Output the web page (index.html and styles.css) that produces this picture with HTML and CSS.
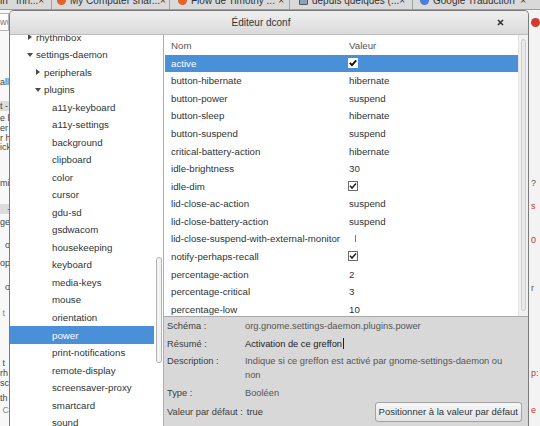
FILE: index.html
```html
<!DOCTYPE html>
<html lang="fr">
<head>
<meta charset="utf-8">
<title>Éditeur dconf</title>
<link rel="stylesheet" href="styles.css">
</head>
<body>
<div class="tabbar">
  <div class="tab t1"><span class="tx">in &nbsp; Inn...</span><span class="tx x">×</span></div>
  <div class="tab t2"><span class="fav"></span><span class="tx">My Computer shar...</span><span class="tx x">×</span></div>
  <div class="tab t3"><span class="fav"></span><span class="tx">Flow de Timothy ...</span><span class="tx x">×</span></div>
  <div class="tab t4"><span class="fav img"></span><span class="tx">depuis quelques (...</span><span class="tx x">×</span></div>
  <div class="tab t5"><span class="fav goo"></span><span class="tx">Google Traduction</span><span class="tx x">×</span></div>
</div>
<div class="desk">
  <div class="bgl">
    <div class="urlbox">www</div>
    <div class="frags">
      <div class="frag">all</div>
      <div class="frag band">t -</div>
      <div class="frag">e b</div>
      <div class="frag">er</div>
      <div class="frag">r h</div>
      <div class="frag">ick</div>
      <div class="frag">mi</div>
      <div class="frag band">&nbsp;&nbsp;&nbsp;-</div>
      <div class="frag">ge</div>
      <div class="frag">&nbsp;&nbsp;o</div>
      <div class="frag">opl</div>
      <div class="frag">&nbsp;&nbsp;o</div>
      <div class="frag">&nbsp;t</div>
      <div class="frag">&nbsp;t</div>
      <div class="frag">rh</div>
      <div class="frag">sc</div>
      <div class="frag">th</div>
      <div class="frag">&nbsp;C</div>
    </div>
  </div>

  <div class="dialog">
    <div class="titlebar">
      <span class="title">Éditeur dconf</span>
      <span class="close"><svg width="7" height="7" viewBox="0 0 7 7"><path d="M1 1 L6 6 M6 1 L1 6" stroke="#2e3436" stroke-width="1.6" fill="none"/></svg></span>
    </div>
    <div class="content">
      <div class="sidebar">
        <div class="dirlist">
          <div class="dirinner">
            <div class="row d1"><span class="slot"><span class="tri-r"></span></span>rhythmbox</div>
            <div class="row d1"><span class="slot"><span class="tri-d"></span></span>settings-daemon</div>
            <div class="row d2"><span class="slot"><span class="tri-r"></span></span>peripherals</div>
            <div class="row d2"><span class="slot"><span class="tri-d"></span></span>plugins</div>
            <div class="row d3">a11y-keyboard</div>
            <div class="row d3">a11y-settings</div>
            <div class="row d3">background</div>
            <div class="row d3">clipboard</div>
            <div class="row d3">color</div>
            <div class="row d3">cursor</div>
            <div class="row d3">gdu-sd</div>
            <div class="row d3">gsdwacom</div>
            <div class="row d3">housekeeping</div>
            <div class="row d3">keyboard</div>
            <div class="row d3">media-keys</div>
            <div class="row d3">mouse</div>
            <div class="row d3">orientation</div>
            <div class="row d3 sel">power</div>
            <div class="row d3">print-notifications</div>
            <div class="row d3">remote-display</div>
            <div class="row d3">screensaver-proxy</div>
            <div class="row d3">smartcard</div>
            <div class="row d3">sound</div>
          </div>
        </div>
        <div class="gutter"><div class="thumb"></div></div>
      </div>

      <div class="main">
        <div class="keys">
          <div class="keylist">
            <div class="krow khead"><span class="kn">Nom</span><span class="kv">Valeur</span></div>
            <div class="krow sel"><span class="kn">active</span><span class="kv"><svg class="cb" width="10" height="10" viewBox="0 0 10 10"><rect x="0.5" y="0.5" width="9" height="9" fill="#fff" stroke="#fff"/><path d="M1.8 4.8 L4 7.2 L8.2 2.4" stroke="#111" stroke-width="1.9" fill="none"/></svg></span></div>
            <div class="krow"><span class="kn">button-hibernate</span><span class="kv">hibernate</span></div>
            <div class="krow"><span class="kn">button-power</span><span class="kv">suspend</span></div>
            <div class="krow"><span class="kn">button-sleep</span><span class="kv">hibernate</span></div>
            <div class="krow"><span class="kn">button-suspend</span><span class="kv">suspend</span></div>
            <div class="krow"><span class="kn">critical-battery-action</span><span class="kv">hibernate</span></div>
            <div class="krow"><span class="kn">idle-brightness</span><span class="kv">30</span></div>
            <div class="krow"><span class="kn">idle-dim</span><span class="kv"><svg class="cb" width="10" height="10" viewBox="0 0 10 10"><rect x="0.5" y="0.5" width="9" height="9" fill="#fff" stroke="#6b6b6b"/><path d="M2 4.8 L4 7 L8 2.4" stroke="#222" stroke-width="1.5" fill="none"/></svg></span></div>
            <div class="krow"><span class="kn">lid-close-ac-action</span><span class="kv">suspend</span></div>
            <div class="krow"><span class="kn">lid-close-battery-action</span><span class="kv">suspend</span></div>
            <div class="krow"><span class="kn">lid-close-suspend-with-external-monitor</span><span class="kv"><svg class="cb" width="10" height="10" viewBox="0 0 10 10"><path d="M7.5 1 L7.5 8" stroke="#7a7a7a" stroke-width="1" fill="none"/></svg></span></div>
            <div class="krow"><span class="kn">notify-perhaps-recall</span><span class="kv"><svg class="cb" width="10" height="10" viewBox="0 0 10 10"><rect x="0.5" y="0.5" width="9" height="9" fill="#fff" stroke="#6b6b6b"/><path d="M2 4.8 L4 7 L8 2.4" stroke="#222" stroke-width="1.5" fill="none"/></svg></span></div>
            <div class="krow"><span class="kn">percentage-action</span><span class="kv">2</span></div>
            <div class="krow"><span class="kn">percentage-critical</span><span class="kv">3</span></div>
            <div class="krow"><span class="kn">percentage-low</span><span class="kv">10</span></div>
          </div>
          <div class="kscroll"><div class="kthumb"></div></div>
        </div>

        <div class="info">
          <span class="lab">Schéma :</span><span class="val">org.gnome.settings-daemon.plugins.power</span>
          <span class="lab">Résumé :</span><span class="val dark">Activation de ce greffon<span class="caret"></span></span>
          <span class="lab">Description :</span><span class="val">Indique si ce greffon est activé par gnome-settings-daemon ou<br>non</span>
          <span class="lab">Type :</span><span class="val">Booléen</span>
          <div class="last"><span class="lab nw">Valeur par défaut :</span><span class="val tv">true</span><button class="btn">Positionner à la valeur par défaut</button></div>
        </div>
      </div>
    </div>
  </div>

  <div class="bgr">
    <div class="redico"></div>
    <div class="rfrags">
      <div class="rf">?</div>
      <div class="rf red">s</div>
      <div class="rf red">0</div>
      <div class="rf">r</div>
      <div class="rf red">p:</div>
      <div class="rf red">e</div>
    </div>
  </div>
</div>
</body>
</html>
```

FILE: styles.css
```css
* { box-sizing: border-box; }
html, body { margin: 0; padding: 0; }
body {
  width: 540px;
  height: 426px;
  overflow: hidden;
  background: #f3f3f3;
  font-family: "Liberation Sans", Arial, sans-serif;
  color: #2e3436;
}

/* browser tab strip behind the dialog */
.tabbar {
  height: 10px;
  display: flex;
  overflow: hidden;
  background: #d9d9d9;
  border-bottom: 1px solid #9c9c9c;
  font-size: 10px;
  color: #333;
}
.tab {
  flex: none;
  height: 9px;
  display: flex;
  align-items: flex-start;
  border-right: 1px solid #a3a3a3;
}
.tab .tx { line-height: 10px; margin-top: -4.5px; white-space: nowrap; }
.tab .x { margin-left: auto; }
.fav {
  flex: none;
  width: 9px;
  height: 9px;
  margin-top: -4px;
  margin-right: 4px;
  border-radius: 50%;
  background: #e5632a;
}
.fav.img { border-radius: 1px; background: #8da2b8; border: 1px solid #556; }
.fav.goo { background: #4a7fd6; }
.t1 { width: 52px; padding-right: 9px; }
.t2 { width: 118px; padding-left: 5px; padding-right: 8px; }
.t3 { width: 120px; padding-left: 8px; padding-right: 5px; }
.t4 { width: 123px; padding-left: 9px; padding-right: 12px; }
.t5 { width: 127px; padding-left: 7px; padding-right: 14px; border-right: none; }

.desk { display: flex; height: 416px; }

/* left sliver of the page behind */
.bgl {
  width: 9px;
  flex: none;
  overflow: hidden;
  background: #f8f8f8;
  font-size: 9px;
  color: #444;
}
.urlbox {
  margin-top: 3px;
  height: 18px;
  width: 9px;
  border: 1px solid #b5b5b5;
  border-left: none;
  background: #fff;
  line-height: 16px;
  color: #777;
  white-space: nowrap;
  overflow: hidden;
}
.frag { line-height: 10px; height: 10px; white-space: nowrap; }
.frag.band { background: #dcdcdc; }
.frag:nth-child(1) { margin-top: 46px; }
.frag:nth-child(2) { margin-top: 14px; }
.frag:nth-child(3) { margin-top: 2px; }
.frag:nth-child(6) { margin-top: -1px; }
.frag:nth-child(7) { margin-top: 26px; }
.frag:nth-child(8) { margin-top: 16px; }
.frag:nth-child(9) { margin-top: 3px; }
.frag:nth-child(10) { margin-top: 13px; }
.frag:nth-child(11) { margin-top: 8px; }
.frag:nth-child(12) { margin-top: 14px; }
.frag:nth-child(13) { margin-top: 16px; color: #888; }
.frag:nth-child(14) { margin-top: 40px; }
.frag:nth-child(17) { margin-top: 5px; }
.frag:nth-child(18) { margin-top: 2px; color: #888; }

/* right sliver */
.bgr {
  flex: 1;
  background: #f3f3f3;
  font-size: 9px;
  color: #555;
  padding-left: 2px;
}
.redico {
  margin-top: 8px;
  width: 9px;
  height: 9px;
  border-radius: 50%;
  background: #cf3b2e;
}
.rf { line-height: 10px; height: 10px; }
.rf.red { color: #c0392b; }
.rf:nth-child(1) { margin-top: 151px; }
.rf:nth-child(2) { margin-top: 13px; }
.rf:nth-child(3) { margin-top: 24px; }
.rf:nth-child(4) { margin-top: 38px; }
.rf:nth-child(5) { margin-top: 75px; }
.rf:nth-child(6) { margin-top: 27px; }

/* the dconf window */
.dialog {
  width: 520px;
  flex: none;
  display: flex;
  flex-direction: column;
  border: 1px solid #7a7a7a;
  border-bottom: none;
  border-radius: 5px 5px 0 0;
  overflow: hidden;
  background: #ededed;
}
.titlebar {
  height: 24px;
  flex: none;
  display: flex;
  align-items: center;
  background: linear-gradient(#efefef, #dadada);
  border-bottom: 1px solid #bdbdbd;
}
.title {
  flex: 1;
  text-align: center;
  padding-left: 20px;
  font-size: 10px;
  color: #2e3436;
}
.close {
  width: 16px;
  margin-right: 20px;
  display: flex;
  justify-content: center;
  align-items: center;
}

.content { flex: 1; display: flex; min-height: 0; }

.sidebar {
  width: 154px;
  flex: none;
  display: flex;
  background: #fff;
  border-right: 1px solid #aeaeae;
}
.dirlist { width: 144px; flex: none; overflow: hidden; }
.dirinner { margin-top: -6.5px; }
.row {
  height: 17.52px;
  display: flex;
  align-items: center;
  font-size: 9.7px;
  white-space: nowrap;
  color: #2e3436;
}
.row.sel { background: #4a90d9; color: #fff; }
.d1 { padding-left: 17px; }
.d2 { padding-left: 25px; }
.d3 { padding-left: 42px; }
.slot { width: 9px; flex: none; display: flex; align-items: center; }
.tri-d {
  width: 0; height: 0;
  border-left: 3px solid transparent;
  border-right: 3px solid transparent;
  border-top: 4px solid #4a4a4a;
}
.tri-r {
  width: 0; height: 0;
  margin-left: 1px;
  border-top: 3px solid transparent;
  border-bottom: 3px solid transparent;
  border-left: 4px solid #4a4a4a;
}
.gutter { width: 9px; flex: none; }
.thumb {
  margin: 222px 0 0 2px;
  width: 6px;
  height: 106px;
  border: 1px solid #b3b3b3;
  border-radius: 3px;
  background: #f3f3f3;
}

.main { flex: 1; min-width: 0; display: flex; flex-direction: column; }
.keys { height: 281px; flex: none; display: flex; background: #fff; }
.keylist { flex: 1; min-width: 0; overflow: hidden; padding: 1px 0 0 1px; }
.krow {
  height: 17.57px;
  display: grid;
  grid-template-columns: 184px 1fr;
  align-items: center;
  font-size: 9.7px;
  white-space: nowrap;
  color: #2e3436;
}
.krow.khead { height: 18.5px; color: #555; }
.krow.sel { background: #4a90d9; color: #fff; }
.kn { padding-left: 6px; }
.kv { display: flex; align-items: center; }
.cb { margin-left: -1px; display: block; }
.kscroll {
  width: 10px;
  flex: none;
  background: #f1f1f1;
  border-left: 1px solid #e2e2e2;
  padding: 4px 2px;
}
.kthumb {
  height: 272px;
  border: 1px solid #cdcdcd;
  border-radius: 3px;
  background: #e9e9e9;
}

.info {
  flex: 1;
  background: #d8d8d8;
  border-top: 1px solid #a9a9a9;
  padding: 2px 6px 0 3px;
  display: grid;
  grid-template-columns: 78px 1fr;
  align-content: start;
  row-gap: 3.5px;
  font-size: 9.3px;
  line-height: 14px;
  color: #444;
}
.lab { color: #3c3c3c; white-space: nowrap; }
.val { color: #555; }
.val.dark { color: #222; }
.caret {
  display: inline-block;
  width: 1px;
  height: 11px;
  margin-left: 1px;
  vertical-align: -2px;
  background: #222;
}
.last {
  grid-column: 1 / -1;
  display: flex;
  align-items: center;
  margin-top: -1px;
}
.tv { margin-left: 4px; color: #333; }
.btn {
  margin-left: auto;
  height: 20px;
  padding: 0 3px;
  border: 1px solid #a3a3a3;
  border-radius: 3px;
  background: linear-gradient(#f7f7f7, #e3e3e3);
  font-family: "Liberation Sans", Arial, sans-serif;
  font-size: 9.5px;
  line-height: 18px;
  color: #2e3436;
}
```
